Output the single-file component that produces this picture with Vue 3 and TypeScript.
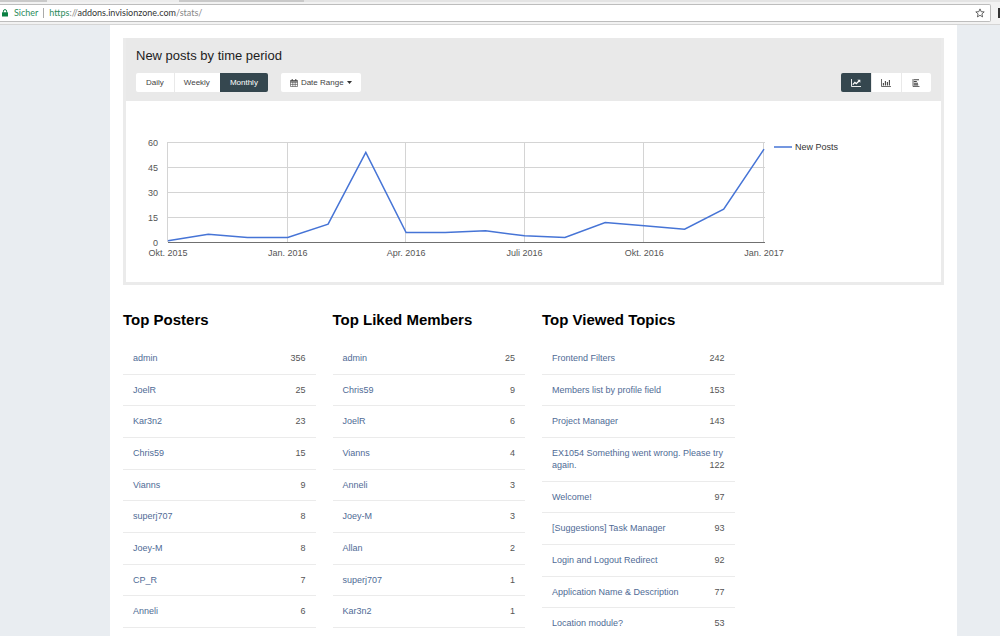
<script setup lang="ts">
import { ref } from 'vue'

interface Entry {
  name: string
  count: number
}
interface Board {
  title: string
  tall?: boolean
  entries: Entry[]
}

const toEntries = (rows: [string, number][]): Entry[] => rows.map(([name, count]) => ({ name, count }))

const boards: Board[] = [
  {
    title: 'Top Posters',
    entries: toEntries([
      ['admin', 356], ['JoelR', 25], ['Kar3n2', 23], ['Chris59', 15], ['Vianns', 9],
      ['superj707', 8], ['Joey-M', 8], ['CP_R', 7], ['Anneli', 6],
    ]),
  },
  {
    title: 'Top Liked Members',
    entries: toEntries([
      ['admin', 25], ['Chris59', 9], ['JoelR', 6], ['Vianns', 4], ['Anneli', 3],
      ['Joey-M', 3], ['Allan', 2], ['superj707', 1], ['Kar3n2', 1],
    ]),
  },
  {
    title: 'Top Viewed Topics',
    tall: true,
    entries: toEntries([
      ['Frontend Filters', 242], ['Members list by profile field', 153], ['Project Manager', 143],
      ['EX1054 Something went wrong. Please try again.', 122], ['Welcome!', 97],
      ['[Suggestions] Task Manager', 93], ['Login and Logout Redirect', 92],
      ['Application Name & Description', 77], ['Location module?', 53],
    ]),
  },
]

const periods = ['Daily', 'Weekly', 'Monthly']
const period = ref('Monthly')
const chartKind = ref('line')
const address = ref('')

// Plot area inside the chart's viewBox
const left = 42
const right = 638
const base = 141
const plotHeight = 100

// Days since 1 October 2015 paired with the number of new posts
const samples: [number, number][] = [
  [0, 1], [31, 5], [61, 3], [92, 3], [123, 11], [152, 54], [183, 6], [213, 6],
  [244, 7], [274, 4], [305, 3], [336, 12], [366, 10], [397, 8], [427, 20], [458, 56],
]
const toX = (day: number) => left + (day / 458) * (right - left)
const toY = (value: number) => base - (value / 60) * plotHeight
const linePoints = samples.map(([d, v]) => `${toX(d).toFixed(1)},${(toY(v) + 0.5).toFixed(1)}`).join(' ')

const yTicks = [60, 45, 30, 15, 0]
const xTicks = [
  { day: 0, label: 'Okt. 2015' },
  { day: 92, label: 'Jan. 2016' },
  { day: 183, label: 'Apr. 2016' },
  { day: 274, label: 'Juli 2016' },
  { day: 366, label: 'Okt. 2016' },
  { day: 458, label: 'Jan. 2017' },
]
const crisp = (n: number) => Math.floor(n) + 0.5
</script>

<template>
  <div class="window">
    <header class="browser">
      <div class="tabs"><span class="tab"></span></div>
      <div class="toolbar">
        <div class="omnibox">
          <svg class="lock" viewBox="0 0 6 8" aria-hidden="true">
            <path d="M1.4 3.5V2.2a1.6 1.6 0 0 1 3.2 0v1.3" fill="none" stroke="#0b8043" stroke-width="1" />
            <rect x="0" y="3.2" width="6" height="4.4" rx=".4" fill="#0b8043" />
          </svg>
          <span class="secure">Sicher</span>
          <span class="divider"></span>
          <label class="address">
            <input v-model="address" type="text" aria-label="Address" />
            <span class="url"><b>https</b>://<i>addons.invisionzone.com</i>/stats/</span>
          </label>
          <button class="star" type="button" aria-label="Bookmark">
            <svg viewBox="0 0 10 10">
              <path d="M5 .9l1.2 2.8 3 .2-2.3 2 .7 3L5 7.3 2.4 8.9l.7-3-2.3-2 3-.2z" fill="none" stroke="#555" stroke-width=".9" />
            </svg>
          </button>
        </div>
        <span class="extension"></span>
      </div>
    </header>

    <main class="page">
      <div class="content">
        <section class="panel">
          <div class="panel-head">
            <h2>New posts by time period</h2>
            <div class="controls">
              <div class="group">
                <button v-for="p in periods" :key="p" type="button" :class="{ active: p === period }" @click="period = p">{{ p }}</button>
              </div>
              <button class="range" type="button">
                <svg class="calendar" viewBox="0 0 8 8" aria-hidden="true">
                  <path d="M.5 1.5h7v6h-7zM.5 3.4h7M.5 5.4h7M2.8 3v4.5M5.2 3v4.5" fill="none" stroke="#444" stroke-width=".6" />
                  <path d="M.5 1.3h7v1.4h-7z" fill="#555" />
                  <path d="M2.2 0v2M5.8 0v2" stroke="#444" stroke-width="1" />
                </svg>
                <span>Date Range</span>
                <svg class="caret" viewBox="0 0 5 3" aria-hidden="true"><path d="M0 0h5L2.5 3z" fill="#333" /></svg>
              </button>
              <div class="group kinds">
                <button type="button" aria-label="Line chart" :class="{ active: chartKind === 'line' }" @click="chartKind = 'line'">
                  <svg viewBox="0 0 10 8">
                    <path d="M.5 0v7.5H10" fill="none" stroke="currentColor" stroke-width=".9" />
                    <path d="M1.8 5.6l2.1-2.2 1.4 1.3L8 2" fill="none" stroke="currentColor" stroke-width="1.3" />
                    <path d="M6.4.8h2.9v2.9z" fill="currentColor" />
                  </svg>
                </button>
                <button type="button" aria-label="Column chart" :class="{ active: chartKind === 'column' }" @click="chartKind = 'column'">
                  <svg viewBox="0 0 10 8">
                    <path d="M.5 0v7.5H10" fill="none" stroke="currentColor" stroke-width=".8" />
                    <path d="M2.4 4v2.6M4.4 2v4.6M6.4 3v3.6M8.4 1v5.6" stroke="currentColor" stroke-width="1.1" />
                  </svg>
                </button>
                <button type="button" aria-label="Bar chart" :class="{ active: chartKind === 'bar' }" @click="chartKind = 'bar'">
                  <svg viewBox="0 0 10 8">
                    <path d="M2 0v7.5h6.5" fill="none" stroke="currentColor" stroke-width=".8" />
                    <path d="M2.8 .7H8M2.8 2.5h3M2.8 4.2H7M2.8 5.9h4.4" stroke="currentColor" stroke-width="1.1" />
                  </svg>
                </button>
              </div>
            </div>
          </div>

          <svg class="chart" viewBox="0 0 815 181" role="img" aria-label="New posts per month">
            <g stroke="#d4d4d4" stroke-width="1">
              <line v-for="t in yTicks" :key="t" :x1="left" :x2="right + 1" :y1="crisp(toY(t))" :y2="crisp(toY(t))" />
              <line v-for="t in xTicks" :key="t.day" :x1="crisp(toX(t.day) - 0.5)" :x2="crisp(toX(t.day) - 0.5)" y1="41" :y2="base" />
            </g>
            <line :x1="left" :x2="right + 1" :y1="base + 0.5" :y2="base + 0.5" stroke="#707070" />
            <polyline :points="linePoints" fill="none" stroke="#4674d6" stroke-width="1.5" />
            <g class="tick">
              <text v-for="t in yTicks" :key="t" x="32" :y="toY(t) + 4" text-anchor="end">{{ t }}</text>
              <text v-for="t in xTicks" :key="t.day" :x="toX(t.day)" y="155" text-anchor="middle">{{ t.label }}</text>
            </g>
            <line x1="648" x2="666" y1="46" y2="46" stroke="#4674d6" stroke-width="1.5" />
            <text class="legend" x="669" y="49">New Posts</text>
          </svg>
        </section>

        <div class="boards">
          <section v-for="b in boards" :key="b.title" class="board">
            <h3>{{ b.title }}</h3>
            <ul :class="{ tall: b.tall }">
              <li v-for="e in b.entries" :key="e.name">
                <a href="#">{{ e.name }}</a>
                <span class="count">{{ e.count }}</span>
              </li>
            </ul>
          </section>
        </div>
      </div>
    </main>
  </div>
</template>

<style>
body {
  margin: 0;
  overflow: hidden;
}
</style>

<style scoped>
* {
  box-sizing: border-box;
}
.window {
  height: 100vh;
  display: flex;
  flex-direction: column;
  overflow: hidden;
  background: #e9edf1;
  font-family: "Liberation Sans", Arial, sans-serif;
}
button {
  font: inherit;
  border: 0;
  padding: 0;
  cursor: pointer;
}

/* Browser chrome */
.browser {
  flex: none;
  background: #f2f2f2;
  border-bottom: 1px solid #d5d5d5;
}
.tabs {
  height: 2px;
  padding-left: 47px;
  background: linear-gradient(90deg, #c9c9c9 304px, #e4e4e4 304px);
}
.tab {
  display: block;
  width: 132px;
  height: 2px;
  background: #ececec;
}
.toolbar {
  display: flex;
  align-items: center;
  gap: 7px;
  padding: 2px 0;
}
.omnibox {
  flex: 1;
  height: 18px;
  display: flex;
  align-items: center;
  padding: 0 5px 0 2px;
  background: #fff;
  border: 1px solid #bdbdbd;
  border-left: 0;
  border-radius: 0 2px 2px 0;
  font: 9px/16px Lato, "Open Sans", sans-serif;
}
.lock {
  width: 6px;
  height: 8px;
}
.secure {
  margin-left: 6px;
  color: #2c8c5c;
}
.divider {
  width: 1px;
  height: 10px;
  margin: 0 5px;
  background: #aaa;
}
.address {
  flex: 1;
  display: grid;
}
.address > * {
  grid-area: 1 / 1;
}
.address input {
  min-width: 0;
  height: 16px;
  border: 0;
  padding: 0;
  outline: 0;
  background: none;
  font: inherit;
}
.url {
  color: #888;
  pointer-events: none;
}
.url b {
  font-weight: 400;
  color: #2c8c5c;
}
.url i {
  font-style: normal;
  color: #333;
}
.star {
  width: 10px;
  height: 10px;
  background: none;
}
.star svg {
  display: block;
}
.extension {
  width: 2px;
  height: 10px;
  background: #333;
}

/* Page */
.page {
  flex: 1;
  min-height: 0;
  padding: 0 43px 0 110px;
}
.content {
  height: 100%;
  padding: 13px 13px 0;
  background: #fff;
}
.panel {
  border: 3px solid #ebebeb;
  border-top: 0;
}
.panel-head {
  padding: 9px 10px;
  background: #e9e9e9;
}
h2 {
  margin: 0 0 9px;
  font-size: 13px;
  line-height: 17px;
  font-weight: 400;
  color: #1c1c1c;
}
.controls {
  display: flex;
  gap: 13px;
  font-size: 8px;
  line-height: 19px;
}
.group {
  display: flex;
}
.group button,
.range {
  height: 19px;
  padding: 0 10px;
  background: #fff;
  color: #444;
}
.group button + button {
  box-shadow: inset 1px 0 #e9e9e9;
}
.group button:first-child {
  border-radius: 2px 0 0 2px;
}
.group button:last-child {
  border-radius: 0 2px 2px 0;
}
.group button.active {
  background: #35474f;
  color: #fff;
  box-shadow: none;
}
.range {
  display: flex;
  align-items: center;
  gap: 3px;
  padding: 0 9px;
  border-radius: 2px;
}
.calendar {
  width: 8px;
  height: 8px;
}
.caret {
  width: 5px;
  height: 3px;
}
.kinds {
  margin-left: auto;
}
.group.kinds button {
  width: 30px;
}
.kinds svg {
  display: block;
  width: 10px;
  height: 8px;
  margin: 0 auto;
}
.chart {
  display: block;
  width: 100%;
  background: #fff;
}
.tick {
  font-size: 9px;
  fill: #555;
}
.legend {
  font-size: 9px;
  fill: #333;
}

/* Leaderboards */
.boards {
  display: grid;
  grid-template-columns: repeat(4, 1fr);
  align-items: start;
  gap: 17px;
  margin-top: 25px;
}
h3 {
  margin: 0;
  font-size: 15px;
  line-height: 20px;
  color: #000;
}
ul {
  min-height: 285px;
  display: flex;
  flex-direction: column;
  margin: 13px 0 0;
  padding: 0;
  list-style: none;
}
ul.tall {
  min-height: 297px;
}
li {
  flex: 1 0 auto;
  padding: 9px 10px 8px;
  border-bottom: 1px solid #ebebeb;
  font-size: 9px;
  line-height: 12px;
}
li a {
  color: #4f6b96;
  text-decoration: none;
}
.count {
  float: right;
  color: #555;
}
</style>
